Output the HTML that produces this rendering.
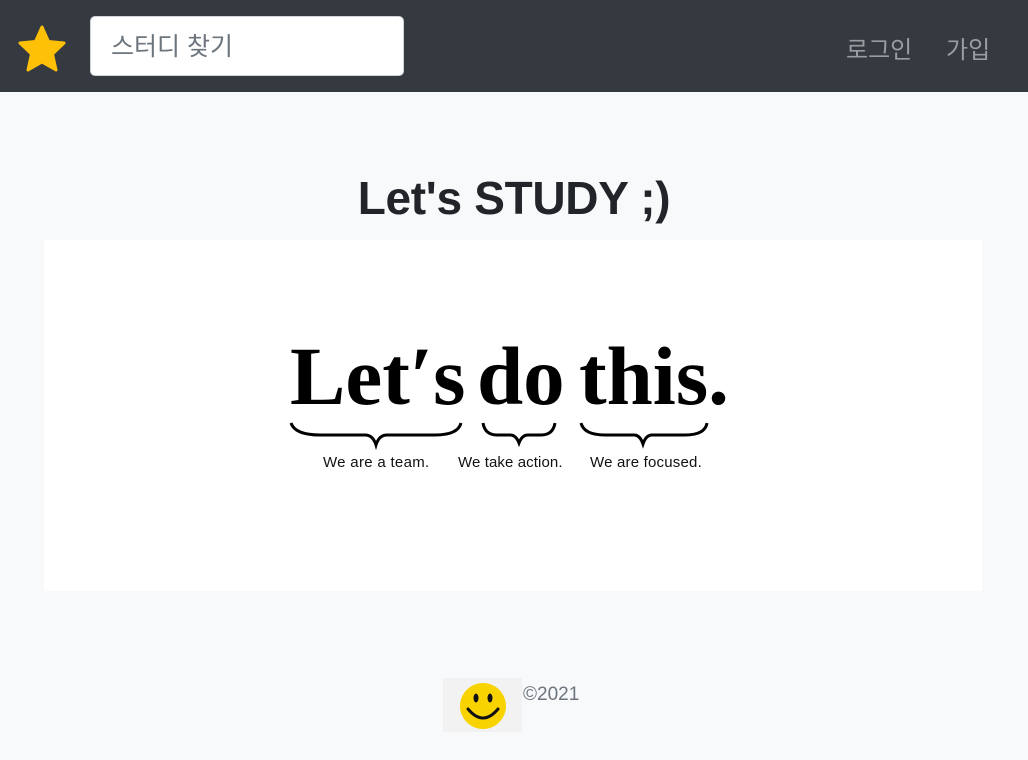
<!DOCTYPE html>
<html><head><meta charset="utf-8"><style>
body{margin:0;width:1028px;height:760px;background:#f8f9fa;font-family:"Liberation Sans","Noto Sans CJK KR",sans-serif;position:relative;overflow:hidden}
.nav{position:absolute;left:0;top:0;width:1028px;height:92px;background:#343a40}
.inp{position:absolute;left:90px;top:16px;width:314px;height:60px;background:#fff;border:1px solid #ced4da;border-radius:5px;box-sizing:border-box;font-size:25px;color:#6c757d;padding-left:20px;line-height:60px}
.links{position:absolute;top:30px;font-size:24px;color:#9a9da0}
h1{position:absolute;left:0;width:1028px;text-align:center;top:171px;margin:0;font-size:46px;font-weight:bold;color:#212529;letter-spacing:-0.3px}
.box{position:absolute;left:44px;top:240px;width:938px;height:351px;background:#fff}
.big{position:absolute;top:328px;font-family:"Liberation Serif",serif;font-weight:bold;font-size:83px;color:#000;letter-spacing:0px;white-space:nowrap}
.cap{position:absolute;top:454px;font-size:15px;color:#111;white-space:nowrap}
.foot{position:absolute;left:523px;top:684px;font-size:19px;color:#6c757d}
</style></head><body>
<div class="nav">
<svg style="position:absolute;left:17px;top:25px" width="50" height="48" viewBox="0 0 50 48"><path d="M25 2 L31.5 16.5 L47 18 L35.5 29 L39 45 L25 37 L11 45 L14.5 29 L3 18 L18.5 16.5 Z" fill="#ffc107" stroke="#ffc107" stroke-width="3" stroke-linejoin="round"/></svg>
<div class="inp">스터디 찾기</div>
<div class="links" style="left:846px">로그인</div>
<div class="links" style="left:946px">가입</div>
</div>
<h1>Let's STUDY ;)</h1>
<div class="box"></div>
<div class="big" style="left:290px">Let′s</div>
<div class="big" style="left:477px">do</div>
<div class="big" style="left:579px">this.</div>
<svg style="position:absolute;left:0;top:415px" width="1028" height="35">
<g fill="none" stroke="#000" stroke-width="3">
<path d="M291 8 Q295 20 320 20 L365 20 Q373 20 376 30 Q379 20 387 20 L435 20 Q458 20 461 8"/>
<path d="M483 8 Q485 20 497 20 L510 20 Q516 20 519 28 Q522 20 528 20 L541 20 Q553 20 555 8"/>
<path d="M581 8 Q584 20 605 20 L634 20 Q640 20 643 29 Q646 20 652 20 L685 20 Q705 20 707 8"/>
</g></svg>
<div class="cap" style="left:323px;letter-spacing:0.3px">We are a team.</div>
<div class="cap" style="left:458px;letter-spacing:0.1px">We take action.</div>
<div class="cap" style="left:590px;letter-spacing:0.2px">We are focused.</div>
<div style="position:absolute;left:443px;top:678px;width:79px;height:54px;background:#f2f2f2"></div>
<svg style="position:absolute;left:458px;top:681px" width="50" height="50" viewBox="0 0 50 50"><circle cx="25" cy="25" r="23" fill="#f9d300"/><ellipse cx="18" cy="17" rx="2.5" ry="4.5" fill="#111"/><ellipse cx="32" cy="17" rx="2.5" ry="4.5" fill="#111"/><path d="M10 28 Q25 46 40 28" fill="none" stroke="#111" stroke-width="3" stroke-linecap="round"/></svg>
<div class="foot">©2021</div>
</body></html>
